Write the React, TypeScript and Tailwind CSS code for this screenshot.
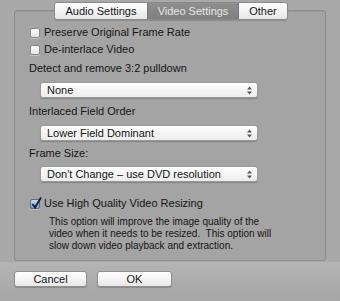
import React from "react";

const font = { fontFamily: '"Liberation Sans", Arial, sans-serif' };

function Checkbox({ checked, label }: { checked?: boolean; label: string }) {
  return (
    <div className="flex items-center h-[17px]">
      <span
        className={`relative w-[10px] h-[10px] rounded-[2px] border shadow-[0_1px_0_rgba(255,255,255,0.35)] ${
          checked
            ? "border-[#4a6f9c] bg-gradient-to-b from-[#c9ddf3] to-[#6fa0d8]"
            : "border-[#8a8a8a] bg-gradient-to-b from-[#ffffff] to-[#e2e2e2]"
        }`}
      >
        {checked && (
          <svg className="absolute -left-[1px] -top-[4px]" width="13" height="14" viewBox="0 0 13 14">
            <path d="M2.5 8 L5 11.5 L11 1.5" fill="none" stroke="#1c2233" strokeWidth="2" />
          </svg>
        )}
      </span>
      <span className="ml-[4px] text-[11px] text-[#141414]">{label}</span>
    </div>
  );
}

function Select({ value }: { value: string }) {
  return (
    <div className="ml-[25px] w-[218px] h-[16px] rounded-[3px] bg-gradient-to-b from-[#ffffff] to-[#ececec] border border-[#9a9a9a] shadow-[0_1px_1px_rgba(0,0,0,0.2)] flex items-center justify-between pl-[6px] pr-[5px]">
      <span className="text-[11px] text-[#141414] leading-none">{value}</span>
      <svg width="5" height="9" viewBox="0 0 5 9">
        <path d="M0 3.5 L2.5 0.5 L5 3.5 Z" fill="#555" />
        <path d="M0 5.5 L2.5 8.5 L5 5.5 Z" fill="#555" />
      </svg>
    </div>
  );
}

function Label({ text }: { text: string }) {
  return <div className="h-[17px] flex items-center pl-[14px] text-[11px] text-[#141414]">{text}</div>;
}

export default function App() {
  return (
    <div className="w-[340px] h-[301px] bg-[#a9a9a9] flex flex-col overflow-hidden" style={font}>
      <div className="relative mx-[14px] mt-[10px] h-[251px] border border-[#8c8c8c] rounded-[3px] bg-[#a4a4a4] shadow-[inset_0_1px_0_rgba(0,0,0,0.06)]">
        <div className="absolute left-[39px] -top-[9px] h-[18px] flex rounded-[3px] border border-[#8a8a8a] overflow-hidden shadow-[0_1px_1px_rgba(0,0,0,0.15)] text-[11px]">
          <div className="w-[92px] flex items-center justify-center bg-gradient-to-b from-[#ffffff] to-[#e6e6e6] text-[#141414]">
            Audio Settings
          </div>
          <div className="w-[92px] flex items-center justify-center bg-gradient-to-b from-[#8f8f8f] to-[#7f7f7f] text-[#e4e4e4] border-x border-[#777]">
            Video Settings
          </div>
          <div className="w-[48px] flex items-center justify-center bg-gradient-to-b from-[#ffffff] to-[#e6e6e6] text-[#141414]">
            Other
          </div>
        </div>

        <div className="pt-[13px] pl-[15px]">
          <Checkbox label="Preserve Original Frame Rate" />
          <Checkbox label="De-interlace Video" />
        </div>
        <div className="mt-[2px]">
          <Label text="Detect and remove 3:2 pulldown" />
          <div className="mt-[5px]">
            <Select value="None" />
          </div>
          <div className="mt-[5px]">
            <Label text="Interlaced Field Order" />
          </div>
          <div className="mt-[5px]">
            <Select value="Lower Field Dominant" />
          </div>
          <div className="mt-[4px]">
            <Label text="Frame Size:" />
          </div>
          <div className="mt-[4px]">
            <Select value="Don&#39;t Change – use DVD resolution" />
          </div>
        </div>
        <div className="mt-[13px] pl-[15px]">
          <Checkbox checked label="Use High Quality Video Resizing" />
        </div>
        <div className="mt-[4px] pl-[34px] text-[10px] leading-[12px] text-[#141414]">
          This option will improve the image quality of the
          <br />
          video when it needs to be resized.&nbsp; This option will
          <br />
          slow down video playback and extraction.
        </div>
      </div>

      <div className="flex-1 mt-[1px] bg-gradient-to-b from-[#b4b4b4] to-[#a6a6a6] flex items-start gap-[10px] pl-[14px] pt-[9px]">
        <button className="w-[73px] h-[16px] rounded-[3px] border border-[#8f8f8f] bg-gradient-to-b from-[#ffffff] to-[#e8e8e8] shadow-[0_1px_1px_rgba(0,0,0,0.2)] text-[11px] text-[#141414] leading-none">
          Cancel
        </button>
        <button className="w-[75px] h-[16px] rounded-[3px] border border-[#8f8f8f] bg-gradient-to-b from-[#ffffff] to-[#e8e8e8] shadow-[0_1px_1px_rgba(0,0,0,0.2)] text-[11px] text-[#141414] leading-none">
          OK
        </button>
      </div>
    </div>
  );
}
